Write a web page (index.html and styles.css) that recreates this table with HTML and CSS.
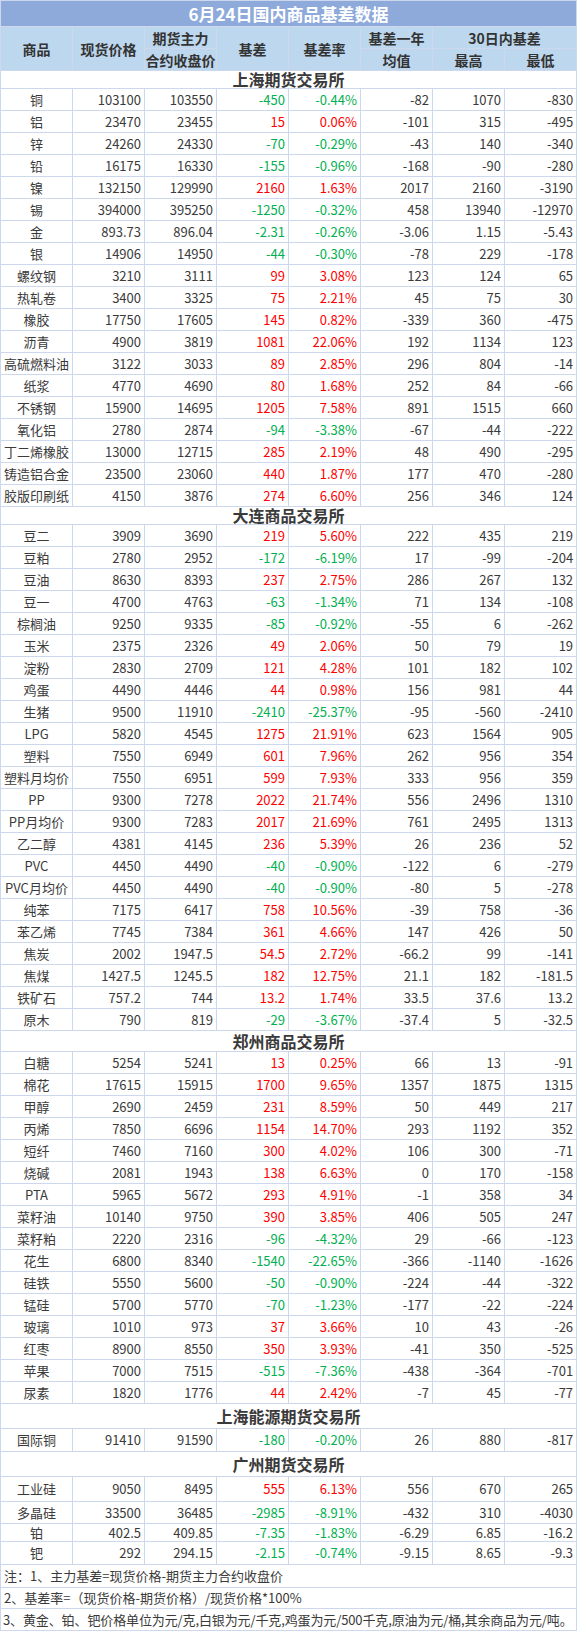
FILE: index.html
```html
<!DOCTYPE html>
<html lang="zh-CN">
<head>
<meta charset="utf-8">
<title>6月24日国内商品基差数据</title>
<link rel="stylesheet" href="styles.css">
</head>
<body>
<table class="basis">
<colgroup>
<col class="c"><col class="c"><col class="c"><col class="c"><col class="c"><col class="c"><col class="c"><col class="c">
</colgroup>
<tbody>
<tr class="title-row"><td colspan="8" class="title">6月24日国内商品基差数据</td></tr>
<tr class="hd-row"><td rowspan="2" class="hd">商品</td><td rowspan="2" class="hd">现货价格</td><td class="hd">期货主力</td><td rowspan="2" class="hd">基差</td><td rowspan="2" class="hd">基差率</td><td class="hd">基差一年</td><td colspan="2" class="hd">30日内基差</td></tr>
<tr class="hd-row"><td class="hd">合约收盘价</td><td class="hd">均值</td><td class="hd">最高</td><td class="hd">最低</td></tr>

<tr class="sec-row"><td colspan="8" class="sec">上海期货交易所</td></tr>
<tr><td class="n">铜</td><td class="v">103100</td><td class="v">103550</td><td class="v dn">-450</td><td class="v dn">-0.44%</td><td class="v">-82</td><td class="v">1070</td><td class="v">-830</td></tr>
<tr><td class="n">铝</td><td class="v">23470</td><td class="v">23455</td><td class="v up">15</td><td class="v up">0.06%</td><td class="v">-101</td><td class="v">315</td><td class="v">-495</td></tr>
<tr><td class="n">锌</td><td class="v">24260</td><td class="v">24330</td><td class="v dn">-70</td><td class="v dn">-0.29%</td><td class="v">-43</td><td class="v">140</td><td class="v">-340</td></tr>
<tr><td class="n">铅</td><td class="v">16175</td><td class="v">16330</td><td class="v dn">-155</td><td class="v dn">-0.96%</td><td class="v">-168</td><td class="v">-90</td><td class="v">-280</td></tr>
<tr><td class="n">镍</td><td class="v">132150</td><td class="v">129990</td><td class="v up">2160</td><td class="v up">1.63%</td><td class="v">2017</td><td class="v">2160</td><td class="v">-3190</td></tr>
<tr><td class="n">锡</td><td class="v">394000</td><td class="v">395250</td><td class="v dn">-1250</td><td class="v dn">-0.32%</td><td class="v">458</td><td class="v">13940</td><td class="v">-12970</td></tr>
<tr><td class="n">金</td><td class="v">893.73</td><td class="v">896.04</td><td class="v dn">-2.31</td><td class="v dn">-0.26%</td><td class="v">-3.06</td><td class="v">1.15</td><td class="v">-5.43</td></tr>
<tr><td class="n">银</td><td class="v">14906</td><td class="v">14950</td><td class="v dn">-44</td><td class="v dn">-0.30%</td><td class="v">-78</td><td class="v">229</td><td class="v">-178</td></tr>
<tr><td class="n">螺纹钢</td><td class="v">3210</td><td class="v">3111</td><td class="v up">99</td><td class="v up">3.08%</td><td class="v">123</td><td class="v">124</td><td class="v">65</td></tr>
<tr><td class="n">热轧卷</td><td class="v">3400</td><td class="v">3325</td><td class="v up">75</td><td class="v up">2.21%</td><td class="v">45</td><td class="v">75</td><td class="v">30</td></tr>
<tr><td class="n">橡胶</td><td class="v">17750</td><td class="v">17605</td><td class="v up">145</td><td class="v up">0.82%</td><td class="v">-339</td><td class="v">360</td><td class="v">-475</td></tr>
<tr><td class="n">沥青</td><td class="v">4900</td><td class="v">3819</td><td class="v up">1081</td><td class="v up">22.06%</td><td class="v">192</td><td class="v">1134</td><td class="v">123</td></tr>
<tr><td class="n">高硫燃料油</td><td class="v">3122</td><td class="v">3033</td><td class="v up">89</td><td class="v up">2.85%</td><td class="v">296</td><td class="v">804</td><td class="v">-14</td></tr>
<tr><td class="n">纸浆</td><td class="v">4770</td><td class="v">4690</td><td class="v up">80</td><td class="v up">1.68%</td><td class="v">252</td><td class="v">84</td><td class="v">-66</td></tr>
<tr><td class="n">不锈钢</td><td class="v">15900</td><td class="v">14695</td><td class="v up">1205</td><td class="v up">7.58%</td><td class="v">891</td><td class="v">1515</td><td class="v">660</td></tr>
<tr><td class="n">氧化铝</td><td class="v">2780</td><td class="v">2874</td><td class="v dn">-94</td><td class="v dn">-3.38%</td><td class="v">-67</td><td class="v">-44</td><td class="v">-222</td></tr>
<tr><td class="n">丁二烯橡胶</td><td class="v">13000</td><td class="v">12715</td><td class="v up">285</td><td class="v up">2.19%</td><td class="v">48</td><td class="v">490</td><td class="v">-295</td></tr>
<tr><td class="n">铸造铝合金</td><td class="v">23500</td><td class="v">23060</td><td class="v up">440</td><td class="v up">1.87%</td><td class="v">177</td><td class="v">470</td><td class="v">-280</td></tr>
<tr><td class="n">胶版印刷纸</td><td class="v">4150</td><td class="v">3876</td><td class="v up">274</td><td class="v up">6.60%</td><td class="v">256</td><td class="v">346</td><td class="v">124</td></tr>

<tr class="sec-row"><td colspan="8" class="sec">大连商品交易所</td></tr>
<tr><td class="n">豆二</td><td class="v">3909</td><td class="v">3690</td><td class="v up">219</td><td class="v up">5.60%</td><td class="v">222</td><td class="v">435</td><td class="v">219</td></tr>
<tr><td class="n">豆粕</td><td class="v">2780</td><td class="v">2952</td><td class="v dn">-172</td><td class="v dn">-6.19%</td><td class="v">17</td><td class="v">-99</td><td class="v">-204</td></tr>
<tr><td class="n">豆油</td><td class="v">8630</td><td class="v">8393</td><td class="v up">237</td><td class="v up">2.75%</td><td class="v">286</td><td class="v">267</td><td class="v">132</td></tr>
<tr><td class="n">豆一</td><td class="v">4700</td><td class="v">4763</td><td class="v dn">-63</td><td class="v dn">-1.34%</td><td class="v">71</td><td class="v">134</td><td class="v">-108</td></tr>
<tr><td class="n">棕榈油</td><td class="v">9250</td><td class="v">9335</td><td class="v dn">-85</td><td class="v dn">-0.92%</td><td class="v">-55</td><td class="v">6</td><td class="v">-262</td></tr>
<tr><td class="n">玉米</td><td class="v">2375</td><td class="v">2326</td><td class="v up">49</td><td class="v up">2.06%</td><td class="v">50</td><td class="v">79</td><td class="v">19</td></tr>
<tr><td class="n">淀粉</td><td class="v">2830</td><td class="v">2709</td><td class="v up">121</td><td class="v up">4.28%</td><td class="v">101</td><td class="v">182</td><td class="v">102</td></tr>
<tr><td class="n">鸡蛋</td><td class="v">4490</td><td class="v">4446</td><td class="v up">44</td><td class="v up">0.98%</td><td class="v">156</td><td class="v">981</td><td class="v">44</td></tr>
<tr><td class="n">生猪</td><td class="v">9500</td><td class="v">11910</td><td class="v dn">-2410</td><td class="v dn">-25.37%</td><td class="v">-95</td><td class="v">-560</td><td class="v">-2410</td></tr>
<tr><td class="n">LPG</td><td class="v">5820</td><td class="v">4545</td><td class="v up">1275</td><td class="v up">21.91%</td><td class="v">623</td><td class="v">1564</td><td class="v">905</td></tr>
<tr><td class="n">塑料</td><td class="v">7550</td><td class="v">6949</td><td class="v up">601</td><td class="v up">7.96%</td><td class="v">262</td><td class="v">956</td><td class="v">354</td></tr>
<tr><td class="n">塑料月均价</td><td class="v">7550</td><td class="v">6951</td><td class="v up">599</td><td class="v up">7.93%</td><td class="v">333</td><td class="v">956</td><td class="v">359</td></tr>
<tr><td class="n">PP</td><td class="v">9300</td><td class="v">7278</td><td class="v up">2022</td><td class="v up">21.74%</td><td class="v">556</td><td class="v">2496</td><td class="v">1310</td></tr>
<tr><td class="n">PP月均价</td><td class="v">9300</td><td class="v">7283</td><td class="v up">2017</td><td class="v up">21.69%</td><td class="v">761</td><td class="v">2495</td><td class="v">1313</td></tr>
<tr><td class="n">乙二醇</td><td class="v">4381</td><td class="v">4145</td><td class="v up">236</td><td class="v up">5.39%</td><td class="v">26</td><td class="v">236</td><td class="v">52</td></tr>
<tr><td class="n">PVC</td><td class="v">4450</td><td class="v">4490</td><td class="v dn">-40</td><td class="v dn">-0.90%</td><td class="v">-122</td><td class="v">6</td><td class="v">-279</td></tr>
<tr><td class="n">PVC月均价</td><td class="v">4450</td><td class="v">4490</td><td class="v dn">-40</td><td class="v dn">-0.90%</td><td class="v">-80</td><td class="v">5</td><td class="v">-278</td></tr>
<tr><td class="n">纯苯</td><td class="v">7175</td><td class="v">6417</td><td class="v up">758</td><td class="v up">10.56%</td><td class="v">-39</td><td class="v">758</td><td class="v">-36</td></tr>
<tr><td class="n">苯乙烯</td><td class="v">7745</td><td class="v">7384</td><td class="v up">361</td><td class="v up">4.66%</td><td class="v">147</td><td class="v">426</td><td class="v">50</td></tr>
<tr><td class="n">焦炭</td><td class="v">2002</td><td class="v">1947.5</td><td class="v up">54.5</td><td class="v up">2.72%</td><td class="v">-66.2</td><td class="v">99</td><td class="v">-141</td></tr>
<tr><td class="n">焦煤</td><td class="v">1427.5</td><td class="v">1245.5</td><td class="v up">182</td><td class="v up">12.75%</td><td class="v">21.1</td><td class="v">182</td><td class="v">-181.5</td></tr>
<tr><td class="n">铁矿石</td><td class="v">757.2</td><td class="v">744</td><td class="v up">13.2</td><td class="v up">1.74%</td><td class="v">33.5</td><td class="v">37.6</td><td class="v">13.2</td></tr>
<tr><td class="n">原木</td><td class="v">790</td><td class="v">819</td><td class="v dn">-29</td><td class="v dn">-3.67%</td><td class="v">-37.4</td><td class="v">5</td><td class="v">-32.5</td></tr>

<tr class="sec-row h21"><td colspan="8" class="sec">郑州商品交易所</td></tr>
<tr><td class="n">白糖</td><td class="v">5254</td><td class="v">5241</td><td class="v up">13</td><td class="v up">0.25%</td><td class="v">66</td><td class="v">13</td><td class="v">-91</td></tr>
<tr><td class="n">棉花</td><td class="v">17615</td><td class="v">15915</td><td class="v up">1700</td><td class="v up">9.65%</td><td class="v">1357</td><td class="v">1875</td><td class="v">1315</td></tr>
<tr><td class="n">甲醇</td><td class="v">2690</td><td class="v">2459</td><td class="v up">231</td><td class="v up">8.59%</td><td class="v">50</td><td class="v">449</td><td class="v">217</td></tr>
<tr><td class="n">丙烯</td><td class="v">7850</td><td class="v">6696</td><td class="v up">1154</td><td class="v up">14.70%</td><td class="v">293</td><td class="v">1192</td><td class="v">352</td></tr>
<tr><td class="n">短纤</td><td class="v">7460</td><td class="v">7160</td><td class="v up">300</td><td class="v up">4.02%</td><td class="v">106</td><td class="v">300</td><td class="v">-71</td></tr>
<tr><td class="n">烧碱</td><td class="v">2081</td><td class="v">1943</td><td class="v up">138</td><td class="v up">6.63%</td><td class="v">0</td><td class="v">170</td><td class="v">-158</td></tr>
<tr><td class="n">PTA</td><td class="v">5965</td><td class="v">5672</td><td class="v up">293</td><td class="v up">4.91%</td><td class="v">-1</td><td class="v">358</td><td class="v">34</td></tr>
<tr><td class="n">菜籽油</td><td class="v">10140</td><td class="v">9750</td><td class="v up">390</td><td class="v up">3.85%</td><td class="v">406</td><td class="v">505</td><td class="v">247</td></tr>
<tr><td class="n">菜籽粕</td><td class="v">2220</td><td class="v">2316</td><td class="v dn">-96</td><td class="v dn">-4.32%</td><td class="v">29</td><td class="v">-66</td><td class="v">-123</td></tr>
<tr><td class="n">花生</td><td class="v">6800</td><td class="v">8340</td><td class="v dn">-1540</td><td class="v dn">-22.65%</td><td class="v">-366</td><td class="v">-1140</td><td class="v">-1626</td></tr>
<tr><td class="n">硅铁</td><td class="v">5550</td><td class="v">5600</td><td class="v dn">-50</td><td class="v dn">-0.90%</td><td class="v">-224</td><td class="v">-44</td><td class="v">-322</td></tr>
<tr><td class="n">锰硅</td><td class="v">5700</td><td class="v">5770</td><td class="v dn">-70</td><td class="v dn">-1.23%</td><td class="v">-177</td><td class="v">-22</td><td class="v">-224</td></tr>
<tr><td class="n">玻璃</td><td class="v">1010</td><td class="v">973</td><td class="v up">37</td><td class="v up">3.66%</td><td class="v">10</td><td class="v">43</td><td class="v">-26</td></tr>
<tr><td class="n">红枣</td><td class="v">8900</td><td class="v">8550</td><td class="v up">350</td><td class="v up">3.93%</td><td class="v">-41</td><td class="v">350</td><td class="v">-525</td></tr>
<tr><td class="n">苹果</td><td class="v">7000</td><td class="v">7515</td><td class="v dn">-515</td><td class="v dn">-7.36%</td><td class="v">-438</td><td class="v">-364</td><td class="v">-701</td></tr>
<tr><td class="n">尿素</td><td class="v">1820</td><td class="v">1776</td><td class="v up">44</td><td class="v up">2.42%</td><td class="v">-7</td><td class="v">45</td><td class="v">-77</td></tr>

<tr class="sec-row h25"><td colspan="8" class="sec">上海能源期货交易所</td></tr>
<tr class="h23"><td class="n">国际铜</td><td class="v">91410</td><td class="v">91590</td><td class="v dn">-180</td><td class="v dn">-0.20%</td><td class="v">26</td><td class="v">880</td><td class="v">-817</td></tr>

<tr class="sec-row h25"><td colspan="8" class="sec">广州期货交易所</td></tr>
<tr class="h25"><td class="n">工业硅</td><td class="v">9050</td><td class="v">8495</td><td class="v up">555</td><td class="v up">6.13%</td><td class="v">556</td><td class="v">670</td><td class="v">265</td></tr>
<tr><td class="n">多晶硅</td><td class="v">33500</td><td class="v">36485</td><td class="v dn">-2985</td><td class="v dn">-8.91%</td><td class="v">-432</td><td class="v">310</td><td class="v">-4030</td></tr>
<tr class="h18"><td class="n">铂</td><td class="v">402.5</td><td class="v">409.85</td><td class="v dn">-7.35</td><td class="v dn">-1.83%</td><td class="v">-6.29</td><td class="v">6.85</td><td class="v">-16.2</td></tr>
<tr class="h23"><td class="n">钯</td><td class="v">292</td><td class="v">294.15</td><td class="v dn">-2.15</td><td class="v dn">-0.74%</td><td class="v">-9.15</td><td class="v">8.65</td><td class="v">-9.3</td></tr>

<tr class="note-row h23"><td colspan="8" class="note">注：1、主力基差=现货价格-期货主力合约收盘价</td></tr>
<tr class="note-row h21"><td colspan="8" class="note">2、基差率=（现货价格-期货价格）/现货价格*100%</td></tr>
<tr class="note-row"><td colspan="8" class="note note-long">3、黄金、铂、钯价格单位为元/克,白银为元/千克,鸡蛋为元/500千克,原油为元/桶,其余商品为元/吨。</td></tr>
</tbody>
</table>
</body>
</html>
```

FILE: styles.css
```css
html, body {
  margin: 0;
  padding: 0;
  background: #ffffff;
}

body {
  font-family: "Noto Sans CJK SC", "Noto Sans", sans-serif;
  color: #3a3a3a;
}

.basis {
  width: 577px;
  table-layout: fixed;
  border-collapse: collapse;
  border: 1px solid #cdd8ee;
}

.basis col.c {
  width: 72px;
}

.basis td {
  border: 1px solid #cdd8ee;
  padding: 0;
  height: 21px;
  font-size: 13px;
  line-height: 16px;
  overflow: hidden;
  white-space: nowrap;
}

.basis tr.title-row td {
  height: 25px;
}

.title {
  background: #8eaadb;
  color: #ffffff;
  font-weight: 700;
  font-size: 17px !important;
  text-align: center;
}

.hd {
  background: #bdd7ee;
  color: #333333;
  font-weight: 700;
  font-size: 14px !important;
  text-align: center;
}

.basis tr.sec-row td {
  height: 17px;
}

.basis td.sec {
  font-weight: 700;
  font-size: 16px;
  line-height: 17px;
  text-align: center;
  color: #3a3a3a;
  overflow: visible;
}

.basis tr.h18 td { height: 17px; }
.basis tr.h21 td { height: 20px; }
.basis tr.h23 td { height: 22px; }
.basis tr.h25 td { height: 24px; }

.n {
  text-align: center;
}

.v {
  text-align: right;
  padding-right: 3px !important;
}

.up { color: #ff0000; }
.dn { color: #00b050; }

.basis td.note {
  text-align: left;
  padding-left: 3px;
  overflow: visible;
}

.basis td.note-long {
  padding-left: 2px;
  letter-spacing: -0.12px;
}
```
